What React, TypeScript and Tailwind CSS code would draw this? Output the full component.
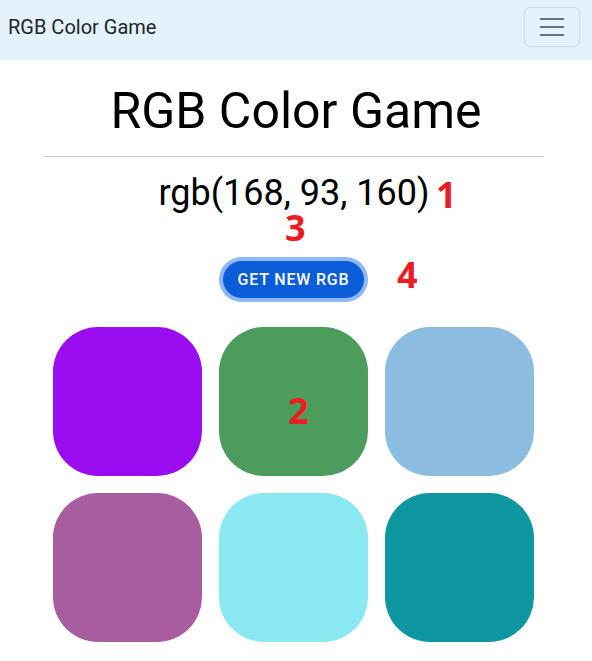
import { useState } from "react";

const initialColors = [
    "rgb(153, 13, 240)",
    "rgb(76, 156, 92)",
    "rgb(140, 188, 224)",
    "rgb(168, 93, 160)",
    "rgb(138, 232, 240)",
    "rgb(14, 151, 160)",
];

function Navbar() {
    return (
        <nav className="h-[60px] bg-[#e3f2fd] flex items-center justify-between pl-[8px] pr-[12px] pb-[6px]">
            <span className="text-[20px] text-[#212529] font-['Roboto',sans-serif]">RGB Color Game</span>
            <button className="w-[56px] h-[40px] border border-[#cdd9e4] rounded-[6px] flex flex-col items-center justify-center gap-[6px]">
                <span className="block w-[24px] h-[2px] bg-[#6a737b]" />
                <span className="block w-[24px] h-[2px] bg-[#6a737b]" />
                <span className="block w-[24px] h-[2px] bg-[#6a737b]" />
            </button>
        </nav>
    );
}

// red annotation digits drawn over the page
function Mark({ n, className }: { n: string; className: string }) {
    return (
        <span className={`absolute leading-[26px] text-[36px] font-bold text-[#ed1c24] font-['Open_Sans',sans-serif] ${className}`}>
            {n}
        </span>
    );
}

export default function App() {
    const [colors] = useState(initialColors);
    const target = "rgb(168, 93, 160)";

    return (
        <div className="relative w-[592px] h-[661px] bg-white overflow-hidden font-['Roboto',sans-serif]">
            <Navbar />

            <div className="flex flex-col items-center">
                <h1 className="mt-[21px] text-[50px] leading-[1.2] text-black">RGB Color Game</h1>
            </div>
            <hr className="mt-[15px] ml-[44px] w-[499px] border-0 border-t border-[#c8c8c8]" />

            <div className="flex flex-col items-center">
                <p className="mt-[18px] mr-[4px] text-[36px] leading-none text-black">{target}</p>
                <button className="mt-[50px] mr-[5px] h-[37px] px-[15px] rounded-full bg-[#0b5cd7] text-white text-[16px] font-medium tracking-[0.05em] ring-4 ring-[#8fb6f6]">
                    GET NEW RGB
                </button>
            </div>

            <div className="mt-[29px] pl-[53px] grid grid-cols-[149px_149px_149px] gap-[17px]">
                {colors.map((c, i) => (
                    <div key={`${c}+${i}`} className="w-[149px] h-[149px] rounded-[45px]" style={{ backgroundColor: c }} />
                ))}
            </div>

            <Mark n="1" className="left-[436px] top-[182px]" />
            <Mark n="3" className="left-[285px] top-[215px]" />
            <Mark n="4" className="left-[397px] top-[262px]" />
            <Mark n="2" className="left-[288px] top-[398px]" />
        </div>
    );
}
